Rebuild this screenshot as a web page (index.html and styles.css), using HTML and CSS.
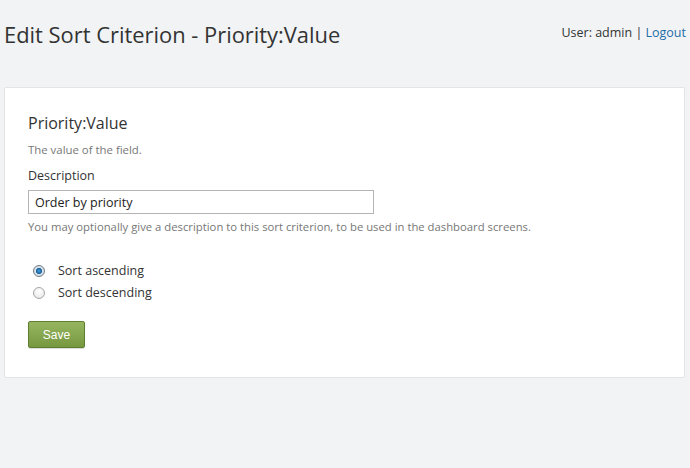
FILE: index.html
```html
<!DOCTYPE html>
<html>
<head>
<meta charset="utf-8">
<link rel="stylesheet" href="styles.css">
</head>
<body>
<header class="top">
  <h1 class="page-title">Edit Sort Criterion - Priority:Value</h1>
  <div class="user">User: admin | <a href="#" class="logout">Logout</a></div>
</header>
<main class="card">
  <h2 class="field-title">Priority:Value</h2>
  <p class="field-desc">The value of the field.</p>
  <label class="label" for="desc">Description</label>
  <input class="text-input" id="desc" type="text" value="Order by priority">
  <p class="hint">You may optionally give a description to this sort criterion, to be used in the dashboard screens.</p>
  <div class="radios">
    <label class="radio-row"><input type="radio" name="dir" class="radio" checked><span>Sort ascending</span></label>
    <label class="radio-row"><input type="radio" name="dir" class="radio"><span>Sort descending</span></label>
  </div>
  <button class="save" type="button">Save</button>
</main>
</body>
</html>
```

FILE: styles.css
```css
html, body {
  margin: 0;
  padding: 0;
  background: #f2f3f5;
}
body {
  font-family: "Open Sans", "Noto Sans", sans-serif;
  color: #333;
  width: 690px;
  height: 468px;
  overflow: hidden;
}
.top {
  display: flex;
  justify-content: space-between;
  align-items: flex-start;
  padding: 0 4px 0 4px;
  height: 87px;
}
.page-title {
  margin: 19px 0 0 0;
  font-weight: 400;
  font-size: 21.9px;
  color: #333;
  line-height: 32px;
}
.user {
  margin-top: 24px;
  font-size: 12.5px;
  color: #333;
  line-height: 18px;
}
.logout {
  color: #1f6ea8;
  text-decoration: none;
}
.card {
  margin: 0 5px 0 4px;
  background: #fff;
  border: 1px solid #e3e4e6;
  border-radius: 2px;
  padding: 24px 24px 29px 23px;
}
.field-title {
  margin: 0;
  font-weight: 400;
  font-size: 16px;
  line-height: 22px;
  color: #333;
}
.field-desc {
  margin: 8px 0 0 0;
  font-size: 11.4px;
  color: #777;
  line-height: 16px;
}
.label {
  display: block;
  margin-top: 9px;
  font-size: 12.5px;
  line-height: 18px;
  color: #333;
}
.text-input {
  display: block;
  margin-top: 5px;
  box-sizing: border-box;
  width: 346px;
  height: 24px;
  border: 1px solid #b5b5b5;
  padding: 0 6px;
  font-family: inherit;
  font-size: 12.5px;
  color: #222;
  outline: none;
}
.hint {
  margin: 5px 0 0 0;
  font-size: 11.3px;
  color: #777;
  line-height: 16px;
}
.radios {
  margin-top: 27px;
  display: flex;
  flex-direction: column;
  gap: 4px;
}
.radio-row {
  display: flex;
  align-items: center;
  font-size: 12.5px;
  line-height: 18px;
  color: #333;
}
.radio {
  appearance: none;
  -webkit-appearance: none;
  margin: 0 13px 0 5px;
  width: 12px;
  height: 12px;
  border-radius: 50%;
  border: 1px solid #a6a6a6;
  background: radial-gradient(circle at 50% 35%, #ffffff 0%, #e4e4e4 100%);
  box-sizing: border-box;
}
.radio:checked {
  border-color: #6f7d8a;
  background: radial-gradient(circle at 50% 50%, #3fa0e0 0%, #1a5f94 40%, #dfe6ee 45%, #c7d0da 100%);
}
.save {
  display: block;
  margin-top: 19px;
  width: 57px;
  height: 27px;
  border: 1px solid #5e7f2f;
  border-radius: 2px;
  background: linear-gradient(#97b560, #76983f);
  color: #fff;
  font-family: "Liberation Sans", Arial, sans-serif;
  font-size: 12px;
  box-shadow: 0 1px 1px rgba(0,0,0,0.15);
  padding: 0;
}
```
